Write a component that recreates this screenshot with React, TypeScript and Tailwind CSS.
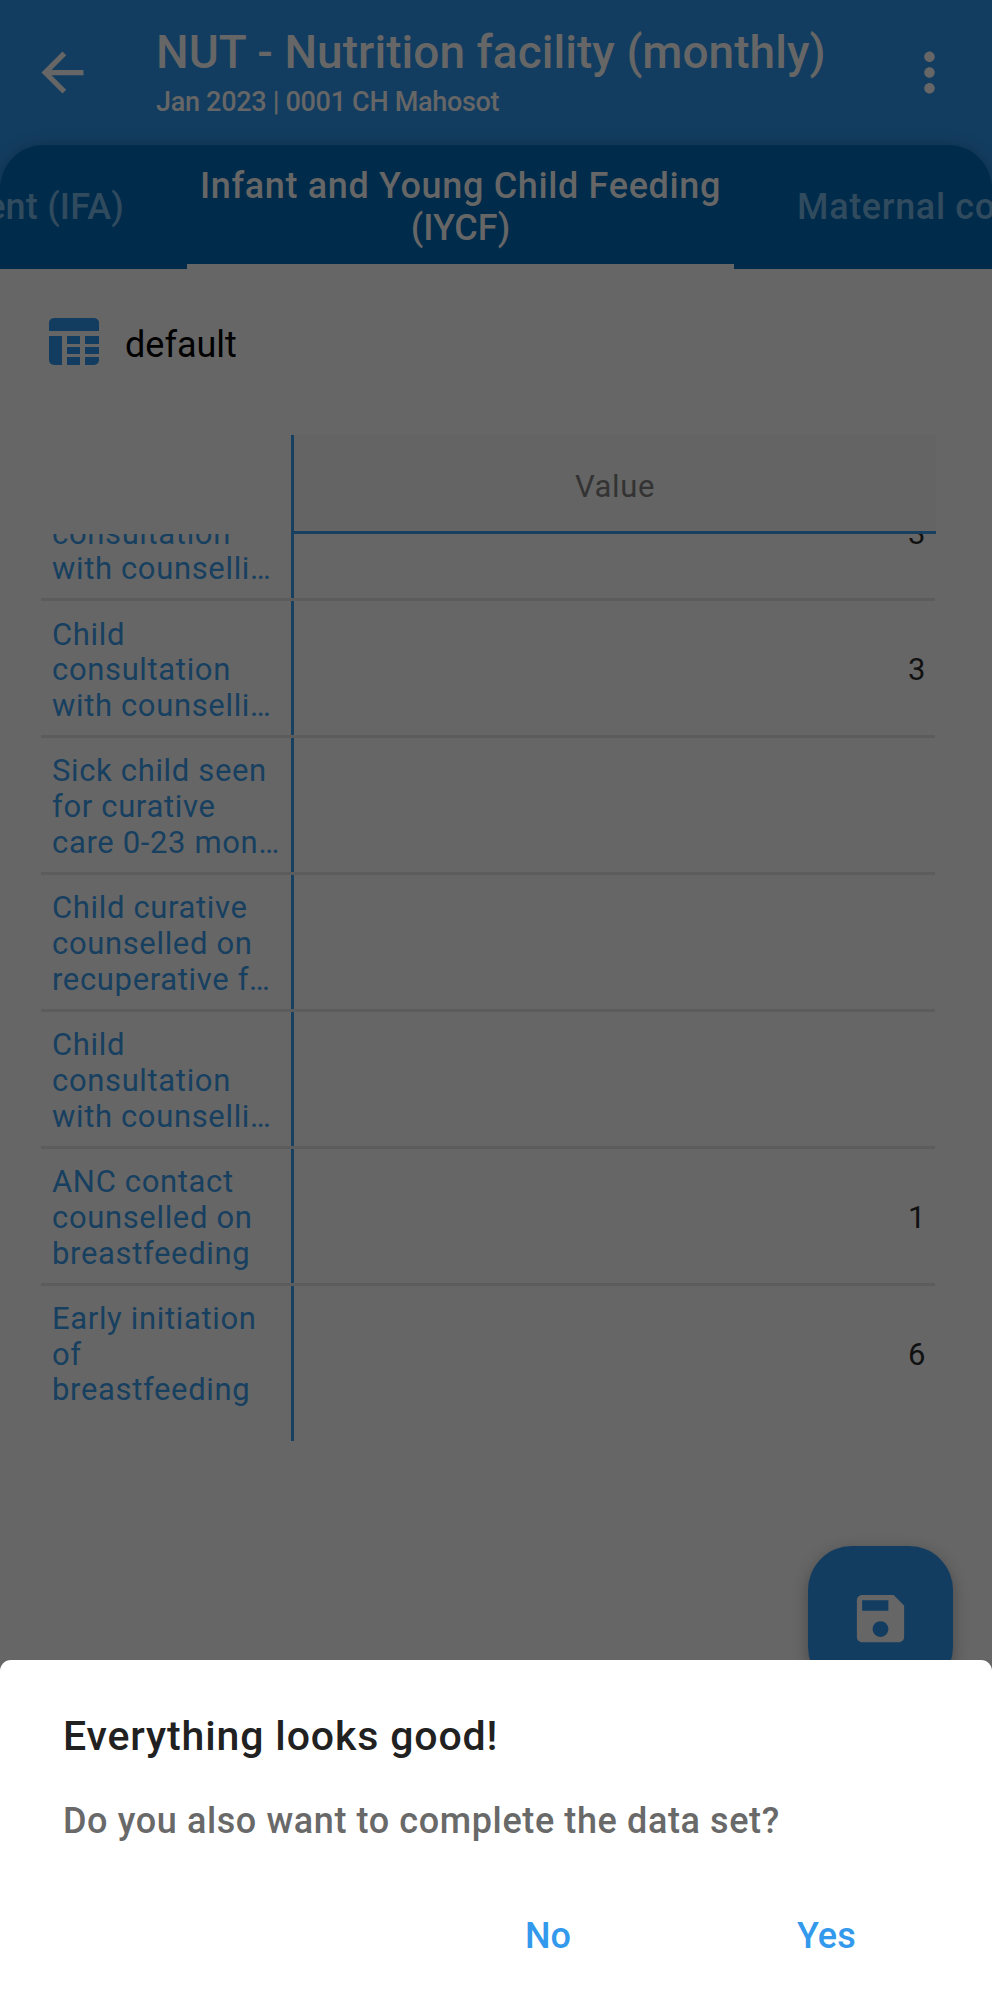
import React from "react";

type Row = { label: string[]; value: string };

const rows: Row[] = [
  { label: ["Child", "consultation", "with counselli…"], value: "3" },
  { label: ["Child", "consultation", "with counselli…"], value: "3" },
  { label: ["Sick child seen", "for curative", "care 0-23 mon…"], value: "" },
  { label: ["Child curative", "counselled on", "recuperative f…"], value: "" },
  { label: ["Child", "consultation", "with counselli…"], value: "" },
  { label: ["ANC contact", "counselled on", "breastfeeding"], value: "1" },
  { label: ["Early initiation", "of", "breastfeeding"], value: "6" },
];

function Header() {
  return (
    <header className="flex h-[145px] shrink-0 text-[#666666]">
      <svg viewBox="0 0 24 24" className="ml-[31px] mt-[41px] h-[63px] w-[63px] shrink-0" fill="currentColor">
        <path d="M20 11H7.83l5.59-5.59L12 4l-8 8 8 8 1.41-1.41L7.83 13H20v-2z" />
      </svg>
      <div className="ml-[62px] flex-1 whitespace-nowrap font-medium">
        <h1 className="mt-[24px] text-[46px] leading-[56px] font-medium tracking-[0.04px]">
          NUT - Nutrition facility (monthly)
        </h1>
        <p className="mt-[5px] text-[27px] leading-[34px] tracking-[-0.3px]">Jan 2023 | 0001 CH Mahosot</p>
      </div>
      <svg viewBox="0 0 24 24" className="mr-[31px] mt-[41px] h-[63px] w-[63px] shrink-0" fill="currentColor">
        <path d="M12 8c1.1 0 2-.9 2-2s-.9-2-2-2-2 .9-2 2 .9 2 2 2zm0 2c-1.1 0-2 .9-2 2s.9 2 2 2 2-.9 2-2-.9-2-2-2zm0 6c-1.1 0-2 .9-2 2s.9 2 2 2 2-.9 2-2-.9-2-2-2z" />
      </svg>
    </header>
  );
}

function Tabs() {
  return (
    <nav className="flex h-[124px] shrink-0 overflow-hidden rounded-t-[44px] bg-[#002b4b] text-[36px] leading-[42px] font-medium tracking-[0.65px] whitespace-nowrap shadow-[0_0_16px_rgba(0,0,0,0.22)]">
      <div className="flex w-[187px] shrink-0 items-center justify-end pr-[63px] tracking-[0.2px] text-[#304a5e]">
        <span>Supplement (IFA)</span>
      </div>
      <div className="flex w-[547px] shrink-0 flex-col items-center justify-center border-b-[5px] border-[#666666] pt-[4px] text-center text-[#666666]">
        <span>Infant and Young Child Feeding</span>
        <span className="tracking-normal">(IYCF)</span>
      </div>
      <div className="flex shrink-0 items-center pl-[63px] text-[#304a5e]">
        <span>Maternal counselling</span>
      </div>
    </nav>
  );
}

function DataTable() {
  return (
    <section className="ml-[41px] flex h-[1006px] w-[895px] shrink-0 flex-col text-[31px] leading-[35.8px] tracking-[0.65px]">
      <div className="flex h-[99px] shrink-0">
        <div className="w-[253px] shrink-0 border-r-[3px] border-[#173f60]" />
        <div className="flex flex-1 items-center justify-center border-b-[3px] border-[#173f60] bg-[#646464] pt-[7px] text-[#333333]">
          Value
        </div>
      </div>
      <div className="flex min-h-0 flex-1 flex-col overflow-hidden">
        <div className="-mt-[69.5px] flex shrink-0 flex-col">
          {rows.map((row, i) => (
            <div
              key={i}
              className="flex h-[136.85px] w-[894px] shrink-0 border-b-[3px] border-[#5c5c5c] last:border-[#666666]"
            >
              <div className="flex w-[253px] shrink-0 flex-col justify-center border-r-[3px] border-[#173f60] pt-[4px] pl-[11px] whitespace-nowrap text-[#173f60]">
                {row.label.map((line) => (
                  <span key={line}>{line}</span>
                ))}
              </div>
              <div className="flex flex-1 items-center justify-end pt-[4px] pr-[9px] text-[#111111]">{row.value}</div>
            </div>
          ))}
        </div>
        <div className="relative -mt-[4px] w-[253px] flex-1 border-r-[3px] border-[#173f60]" />
      </div>
    </section>
  );
}

function CompleteSheet() {
  return (
    <div className="absolute inset-x-0 bottom-0 flex h-[339px] flex-col rounded-t-[11px] bg-white px-[63px] font-medium whitespace-nowrap">
      <h2 className="mt-[51px] text-[41px] leading-[50px] font-medium tracking-[0.87px] text-[#212121]">
        Everything looks good!
      </h2>
      <p className="mt-[38px] text-[36px] leading-[44px] tracking-[0.61px] text-[#696969]">
        Do you also want to complete the data set?
      </p>
      <div className="mt-[71px] flex text-[36px] leading-[44px] text-[#3399ec]">
        <button className="ml-[462px] w-[46px] text-left font-medium">No</button>
        <button className="ml-[226px] text-left font-medium">Yes</button>
      </div>
    </div>
  );
}

export default function App() {
  return (
    <div className="relative flex h-[1999px] w-[992px] flex-col overflow-hidden bg-[#666666] font-['Roboto',sans-serif]">
      <div className="flex shrink-0 flex-col overflow-hidden bg-[#133d60]">
        <Header />
        <Tabs />
      </div>
      <div className="flex h-[166px] shrink-0 pt-[43px] pl-[42px]">
        <svg viewBox="0 0 64 64" className="h-[64px] w-[64px]" fill="#133d60">
          <path d="M7 19V12a5 5 0 0 1 5-6H52a5 5 0 0 1 5 6V19Z" />
          <path d="M7 24H20V53H12a5 5 0 0 1-5-5Z" />
          <path d="M25 24H38V32H25ZM43 24H57V32H43ZM25 35H38V42H25ZM43 35H57V42H43ZM25 45H38V53H25ZM43 45H57V48a5 5 0 0 1-5 5H43Z" />
        </svg>
        <span className="ml-[19px] mt-[11px] text-[36px] leading-[44px] text-black">default</span>
      </div>
      <DataTable />
      <button
        aria-label="Save"
        className="absolute top-[1546px] left-[808px] flex h-[145px] w-[145px] items-center justify-center rounded-[44px] bg-[#133d60] text-[#666666] shadow-[0_5px_16px_rgba(0,0,0,0.3)]"
      >
        <svg viewBox="0 0 24 24" className="h-[63px] w-[63px]" fill="currentColor">
          <path d="M17 3H5c-1.11 0-2 .9-2 2v14c0 1.1.89 2 2 2h14c1.1 0 2-.9 2-2V7l-4-4zm-5 16c-1.66 0-3-1.34-3-3s1.34-3 3-3 3 1.34 3 3-1.34 3-3 3zm3-10H5V5h10v4z" />
        </svg>
      </button>
      <CompleteSheet />
    </div>
  );
}
